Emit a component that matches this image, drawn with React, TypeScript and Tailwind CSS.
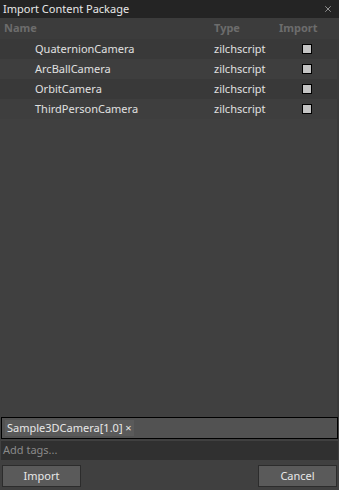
import { X } from 'lucide-react';

// ── Data ─────────────────────────────────────────────────────────────────────

const ITEMS = [
  { name: 'QuaternionCamera', type: 'zilchscript' },
  { name: 'ArcBallCamera', type: 'zilchscript' },
  { name: 'OrbitCamera', type: 'zilchscript' },
  { name: 'ThirdPersonCamera', type: 'zilchscript' },
];

const font = { fontFamily: '"Noto Sans", "Open Sans", sans-serif' };

// ── Pieces ───────────────────────────────────────────────────────────────────

function Check() {
  return <div className="h-[10px] w-[10px] border border-black bg-[#c4c4c4]" />;
}

function Row({ name, type, odd }: { name: string; type: string; odd: boolean }) {
  return (
    <div className={`flex h-[20px] items-center text-[11px] text-[#e0e0e0] ${odd ? 'bg-[#393939]' : 'bg-[#3e3e3e]'}`}>
      <span className="w-[214px] pl-[35px]">{name}</span>
      <span className="w-[88px]">{type}</span>
      <Check />
    </div>
  );
}

// ── Main dialog ──────────────────────────────────────────────────────────────

export default function App() {
  return (
    <div className="flex h-[490px] w-[339px] flex-col bg-[#404040] select-none" style={font}>
      {/* Title bar */}
      <div className="flex h-[18px] items-center justify-between bg-[#242424] pl-[3px] pr-[6px] text-[11px] text-[#e8e8e8]">
        <span>Import Content Package</span>
        <X size={10} strokeWidth={1.5} className="text-[#d0d0d0]" />
      </div>

      {/* Header */}
      <div className="flex h-[21px] items-center bg-[#3c3c3c] text-[11px] font-bold text-[#6c6c6c]">
        <span className="w-[214px] pl-[4px]">Name</span>
        <span className="w-[65px]">Type</span>
        <span>Import</span>
      </div>

      {/* Rows */}
      <div className="flex-1 border-r-2 border-[#3a3a3a]">
        {ITEMS.map((it, i) => (
          <Row key={it.name} name={it.name} type={it.type} odd={i % 2 === 0} />
        ))}
      </div>

      {/* Tags */}
      <div className="mx-[1px] mb-[2px] flex h-[22px] items-center border border-black bg-[#525252] px-[3px] text-[11px] text-[#e8e8e8]">
        <span className="bg-[#5a5a5a] px-[2px]">Sample3DCamera[1.0] ×</span>
      </div>
      <div className="mx-[1px] flex h-[19px] items-center bg-[#303030] px-[2px] text-[11px] text-[#8a8a8a]">
        Add tags...
      </div>

      {/* Buttons */}
      <div className="mt-[5px] mb-[3px] flex justify-between px-[2px] text-[11px] text-[#e8e8e8]">
        <button className="flex h-[22px] w-[79px] items-center justify-center border border-[#2c2c2c] bg-[#5a5a5a]">Import</button>
        <button className="flex h-[22px] w-[79px] items-center justify-center border border-[#2c2c2c] bg-[#5a5a5a]">Cancel</button>
      </div>
    </div>
  );
}
